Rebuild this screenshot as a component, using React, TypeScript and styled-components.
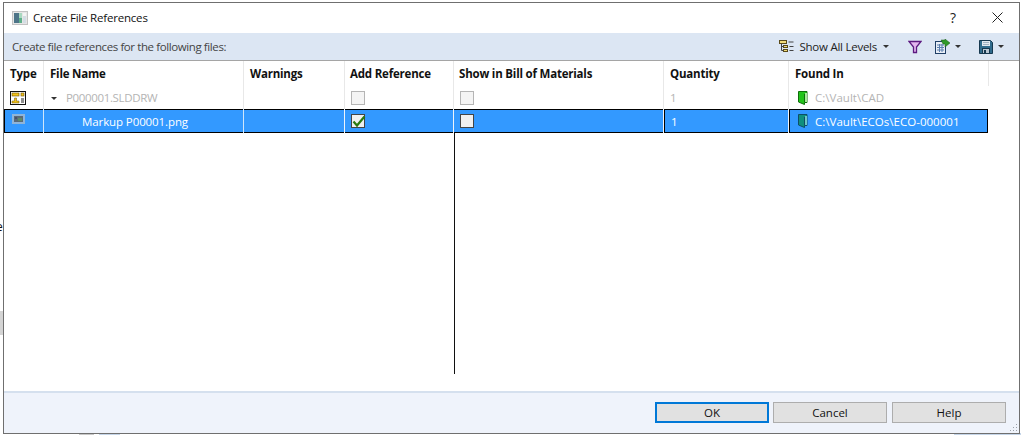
import React from "react";
import styled, { createGlobalStyle } from "styled-components";

const Global = createGlobalStyle`
  html, body { margin: 0; padding: 0; background: #fff; }
  body { width: 1021px; height: 435px; overflow: hidden; font-family: "Open Sans", "Noto Sans", sans-serif; }
`;

const COLS = "39px 1px 199px 1px 100px 1px 108px 1px 209px 1px 124px 1px 199px 1px";

const Page = styled.div`
  position: relative;
  width: 1021px;
  height: 435px;
  padding: 2px 1px 1px 3px;
  box-sizing: border-box;
  background: #fff;
  overflow: hidden;
`;

const Fragment = styled.div<{ $x: number; $y: number; $w: number; $h: number; $c: string }>`
  position: absolute;
  left: ${(p) => p.$x}px;
  top: ${(p) => p.$y}px;
  width: ${(p) => p.$w}px;
  height: ${(p) => p.$h}px;
  background: ${(p) => p.$c};
`;

const Sliver = styled.span`
  position: absolute;
  left: -4px;
  top: 218px;
  font: 12px "Open Sans", sans-serif;
  color: #111;
`;

const Win = styled.div`
  position: relative;
  height: 100%;
  box-sizing: border-box;
  border: 1px solid #6f6f6f;
  display: flex;
  flex-direction: column;
  background: #fff;
`;

const TitleBar = styled.div`
  height: 30px;
  display: flex;
  align-items: center;
  padding-left: 8px;
  flex: none;
`;

const Title = styled.div`
  margin: -2px 0 0 5px;
  font-size: 11.5px;
  color: #111;
  flex: 1;
  letter-spacing: -0.2px;
`;

const HelpMark = styled.div`
  width: 14px;
  font-size: 14px;
  color: #222;
  text-align: center;
  margin-top: -2px;
`;

const CloseBtn = styled.div`
  margin: -2px 16px 0 32px;
  width: 11px;
  height: 11px;
  display: flex;
`;

const Toolbar = styled.div`
  height: 27px;
  flex: none;
  background: #dce6f3;
  border-bottom: 1px solid #a5a5a5;
  box-sizing: content-box;
  display: flex;
  align-items: center;
  padding: 0 15px 0 8px;
  font-size: 11.5px;
  color: #444;
`;

const ToolText = styled.div`
  flex: 1;
  letter-spacing: -0.4px;
`;

const ToolGroup = styled.div<{ $ml: number }>`
  display: flex;
  align-items: center;
  margin-left: ${(p) => p.$ml}px;
  color: #222;
  letter-spacing: -0.25px;
`;

const Caret = styled.span<{ $ml?: number }>`
  display: inline-block;
  width: 0;
  height: 0;
  margin-left: ${(p) => p.$ml ?? 6}px;
  border-left: 3px solid transparent;
  border-right: 3px solid transparent;
  border-top: 3px solid #333;
`;

const LevelLabel = styled.span`
  margin-left: 5px;
`;

const Table = styled.div`
  flex: 1;
  display: flex;
  flex-direction: column;
  min-height: 0;
`;

const Row = styled.div<{ $h: number }>`
  display: grid;
  grid-template-columns: ${COLS};
  height: ${(p) => p.$h}px;
  flex: none;
`;

const Sep = styled.div<{ $tone?: string }>`
  background: ${(p) => p.$tone ?? "#e8e8e8"};
`;

const Head = styled.div<{ $pl?: number }>`
  font-size: 11.5px;
  font-weight: 700;
  color: #111;
  display: flex;
  align-items: center;
  padding-left: ${(p) => p.$pl ?? 6}px;
  letter-spacing: -0.2px;
  padding-bottom: 1px;
`;

const Cell = styled.div<{ $sel?: boolean; $indent?: number; $boxed?: boolean; $edge?: boolean }>`
  display: flex;
  align-items: center;
  font-size: 11.5px;
  letter-spacing: -0.1px;
  padding-left: ${(p) => p.$indent ?? 6}px;
  box-sizing: border-box;
  color: ${(p) => (p.$sel ? "#fff" : "#b4b4b4")};
  background: ${(p) => (p.$sel ? "#3399ff" : "#fff")};
  ${(p) => (p.$sel ? "border-top: 1px solid #000; border-bottom: 1px solid #000;" : "")}
  ${(p) => (p.$boxed ? "border-left: 1px solid #000; border-right: 1px solid #000;" : "")}
  ${(p) => (p.$edge ? "border-left: 1px solid #000;" : "")}
`;

const PathText = styled.span`
  letter-spacing: 0.02px;
`;

const DrawingName = styled.span`
  letter-spacing: -0.35px;
`;

const Check = styled.div<{ $dim?: boolean }>`
  width: 14px;
  height: 14px;
  box-sizing: border-box;
  border: 1px solid ${(p) => (p.$dim ? "#b5b5b5" : "#444")};
  background: ${(p) => (p.$dim ? "#f4f4f4" : "#f0f0f0")};
  position: relative;
`;

const Tick = styled.svg`
  position: absolute;
  left: 0;
  top: -1px;
`;

const Expander = styled.span`
  width: 0;
  height: 0;
  margin-right: 9px;
  margin-top: 2px;
  border-left: 3px solid transparent;
  border-right: 3px solid transparent;
  border-top: 3px solid #333;
`;

const Body = styled.div`
  flex: 1;
  min-height: 0;
  padding-left: 450px;
  padding-bottom: 17px;
  display: flex;
`;

const Rule = styled.div`
  width: 1px;
  background: #111;
`;

const Footer = styled.div`
  height: 42px;
  flex: none;
  box-sizing: border-box;
  background: #eff3fb;
  border-top: 2px solid #d5e0ee;
  display: flex;
  justify-content: flex-end;
  align-items: flex-start;
  padding: 9px 13px 0 0;
`;

const Btn = styled.div<{ $primary?: boolean; $ml?: number }>`
  width: 114px;
  height: 21px;
  margin-left: ${(p) => p.$ml ?? 0}px;
  box-sizing: border-box;
  background: #e1e1e1;
  border: ${(p) => (p.$primary ? "2px solid #0078d7" : "1px solid #adadad")};
  display: flex;
  align-items: center;
  justify-content: center;
  font-size: 11.5px;
  color: #111;
`;

const Grip = styled.svg`
  position: absolute;
  right: 1px;
  bottom: 1px;
`;

const IconSlot = styled.svg<{ $mr?: number; $mt?: number }>`
  flex: none;
  margin-right: ${(p) => p.$mr ?? 0}px;
  margin-top: ${(p) => p.$mt ?? 0}px;
`;

const FolderIcon = ({ teal }: { teal?: boolean }) => {
  const edge = teal ? "#0d4f66" : "#0f6e0c";
  return (
    <IconSlot width="10" height="14" viewBox="0 0 10 14" $mr={7}>
      <path d="M0.5 0.5h8.5v11H6.5v2L0.5 11z" fill={teal ? "#0f8f7d" : "#22c41a"} stroke={edge} />
      <path d="M6.5 3v8" stroke={edge} />
      <path d="M7 2h2v9H7z" fill={teal ? "#6fc7c4" : "#a8eb9a"} />
    </IconSlot>
  );
};

export default function App() {
  return (
    <>
      <Global />
      <Page>
        <Sliver>e</Sliver>
        <Fragment $x={0} $y={311} $w={3} $h={24} $c="#d4d4d4" />
        <Fragment $x={79} $y={433} $w={15} $h={2} $c="#c8c8c8" />
        <Fragment $x={99} $y={433} $w={21} $h={2} $c="#c5d5e8" />
        <Fragment $x={954} $y={433} $w={67} $h={2} $c="#c5d5e8" />
        <Win>
          <TitleBar>
            <svg width="16" height="14" viewBox="0 0 16 14">
              <rect x="0.5" y="0.5" width="15" height="13" fill="#e6e6e6" stroke="#c2c2c2" />
              <rect x="2" y="2" width="5" height="10" fill="#4d7488" />
              <rect x="7" y="2" width="3" height="5" fill="#a9d8c0" />
              <rect x="7" y="7" width="3" height="5" fill="#5fb08a" />
              <rect x="11" y="2" width="3" height="3" fill="#f4f4f4" />
              <rect x="11" y="5" width="3" height="7" fill="#d4dde4" />
            </svg>
            <Title>Create File References</Title>
            <HelpMark>?</HelpMark>
            <CloseBtn>
              <svg width="11" height="11" viewBox="0 0 11 11">
                <path d="M0.5 0.5l10 10M10.5 0.5l-10 10" stroke="#222" strokeWidth="1" fill="none" />
              </svg>
            </CloseBtn>
          </TitleBar>
          <Toolbar>
            <ToolText>Create file references for the following files:</ToolText>
            <ToolGroup $ml={0}>
              <svg width="15" height="13" viewBox="0 0 15 13">
                <rect x="0.5" y="0.5" width="7" height="3" fill="#f4dc78" stroke="#5a4a18" />
                <rect x="4.5" y="5.5" width="4" height="2" fill="#f4dc78" stroke="#5a4a18" />
                <rect x="4.5" y="9.5" width="4" height="2" fill="#f4dc78" stroke="#5a4a18" />
                <path d="M2.5 4v6.5h2M2.5 6.5h2M9.5 2h5M10.5 6.5h4M10.5 10.5h4" stroke="#444" fill="none" />
              </svg>
              <LevelLabel>Show All Levels</LevelLabel>
              <Caret />
            </ToolGroup>
            <ToolGroup $ml={19}>
              <svg width="14" height="14" viewBox="0 0 14 14">
                <path d="M1 1.5h12L8.5 7v5.5h-3V7z" fill="#e3b6ee" stroke="#5c1a80" strokeWidth="1.3" />
              </svg>
            </ToolGroup>
            <ToolGroup $ml={13}>
              <svg width="15" height="15" viewBox="0 0 15 15">
                <rect x="0.5" y="2.5" width="10" height="12" fill="#e8eef6" stroke="#1f3f66" />
                <path d="M2 6h7M2 8.5h7M2 11h7M4.5 5v8M7 5v8" stroke="#5b7fae" strokeWidth="1" />
                <path d="M6 1h4V0l5 4-5 4V5H8z" fill="#2f9a28" stroke="#1a5a18" strokeWidth="0.5" />
              </svg>
              <Caret $ml={5} />
            </ToolGroup>
            <ToolGroup $ml={18}>
              <svg width="14" height="14" viewBox="0 0 14 14">
                <path d="M0.5 0.5h11l2 2v11H0.5z" fill="#2f6b8c" stroke="#16384f" />
                <rect x="3" y="1" width="8" height="5" fill="#dfe8ef" />
                <path d="M4 2.5h6M4 4.5h6" stroke="#9fb2c2" />
                <rect x="3.5" y="8.5" width="7" height="5" fill="#b8c6d2" stroke="#16384f" />
                <rect x="5" y="10" width="2" height="3" fill="#16384f" />
              </svg>
              <Caret $ml={5} />
            </ToolGroup>
          </Toolbar>
          <Table>
            <Row $h={25}>
              <Head>Type</Head><Sep />
              <Head>File Name</Head><Sep />
              <Head>Warnings</Head><Sep />
              <Head $pl={5}>Add Reference</Head><Sep />
              <Head $pl={5}>Show in Bill of Materials</Head><Sep />
              <Head>Quantity</Head><Sep />
              <Head>Found In</Head><Sep />
            </Row>
            <Row $h={23}>
              <Cell $indent={6}>
                <svg width="16" height="14" viewBox="0 0 16 14">
                  <rect x="0.5" y="0.5" width="15" height="13" fill="#fff" stroke="#111" />
                  <rect x="2" y="2" width="7" height="3" fill="#f2c21a" stroke="#6a5208" strokeWidth="0.6" />
                  <rect x="11" y="2" width="3" height="3" fill="#f2c21a" stroke="#6a5208" strokeWidth="0.6" />
                  <path d="M4.5 7h2v3h2.5v2H2v-2h2.5z" fill="#f2c21a" stroke="#6a5208" strokeWidth="0.5" />
                  <rect x="11" y="7" width="3" height="5" fill="#8f8f8f" />
                </svg>
              </Cell><Sep />
              <Cell $indent={7}><Expander /><DrawingName>P000001.SLDDRW</DrawingName></Cell><Sep />
              <Cell /><Sep />
              <Cell><Check $dim /></Cell><Sep />
              <Cell><Check $dim /></Cell><Sep />
              <Cell>1</Cell><Sep />
              <Cell $indent={9}><FolderIcon /><PathText>C:\Vault\CAD</PathText></Cell><Sep $tone="#fff" />
            </Row>
            <Row $h={24}>
              <Cell $sel $edge $indent={7}>
                <IconSlot width="13" height="10" viewBox="0 0 13 10" $mt={-4}>
                  <rect width="13" height="10" fill="#8fb4d8" />
                  <rect x="2" y="2" width="9" height="6" fill="#5a6a78" />
                  <rect x="6" y="4" width="4" height="3" fill="#5e8a68" />
                  <rect x="3" y="3" width="2" height="2" fill="#46506a" />
                </IconSlot>
              </Cell><Sep $tone="#cfe6fb" />
              <Cell $sel $indent={38}>Markup P00001.png</Cell><Sep $tone="#cfe6fb" />
              <Cell $sel /><Sep $tone="#eef4fb" />
              <Cell $sel>
                <Check>
                  <Tick width="14" height="14" viewBox="0 0 14 14">
                    <path d="M1.5 7.5l3.5 4L12.5 2.5" stroke="#2a7a10" strokeWidth="2.2" fill="none" />
                  </Tick>
                </Check>
              </Cell><Sep $tone="#eef4fb" />
              <Cell $sel><Check /></Cell><Sep $tone="#eef4fb" />
              <Cell $sel $edge>1</Cell><Sep $tone="#eef4fb" />
              <Cell $sel $boxed $indent={8}><FolderIcon teal /><PathText>C:\Vault\ECOs\ECO-000001</PathText></Cell><Sep $tone="#fff" />
            </Row>
            <Body><Rule /></Body>
          </Table>
          <Footer>
            <Btn $primary>OK</Btn>
            <Btn $ml={4}>Cancel</Btn>
            <Btn $ml={5}>Help</Btn>
          </Footer>
          <Grip width="9" height="9" viewBox="0 0 9 9">
            <path d="M7 1h1v1H7zM4 4h1v1H4zM7 4h1v1H7zM1 7h1v1H1zM4 7h1v1H4zM7 7h1v1H7z" fill="#9aa0a8" />
          </Grip>
        </Win>
      </Page>
    </>
  );
}
